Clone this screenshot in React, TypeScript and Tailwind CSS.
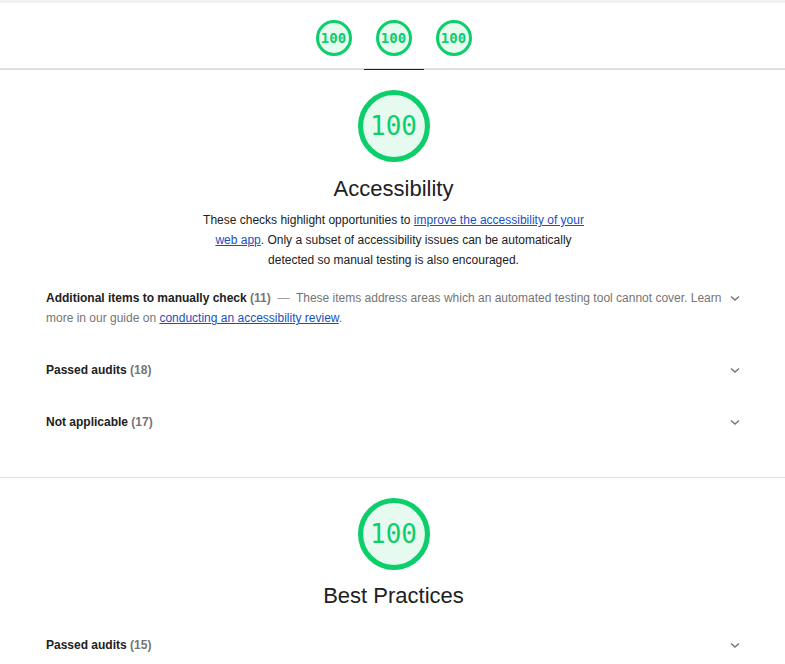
import React from "react";

const GREEN = "#0cce6b";

function Gauge({ size, stroke, fontClass }: { size: number; stroke: number; fontClass: string }) {
  return (
    <div className="relative flex items-center justify-center" style={{ width: size, height: size }}>
      <svg width={size} height={size} viewBox="0 0 120 120" className="absolute inset-0">
        <circle cx="60" cy="60" r={60 - stroke / 2} fill="#e7faf0" stroke={GREEN} strokeWidth={stroke} />
      </svg>
      <span
        className={`relative text-[#0cce6b] leading-none ${fontClass}`}
        style={{ fontFamily: '"DejaVu Sans Mono", "Liberation Mono", monospace' }}
      >
        100
      </span>
    </div>
  );
}

function Chevron() {
  return (
    <svg width="12" height="20" viewBox="0 0 12 20" className="shrink-0">
      <path d="M2 8.5 L6 12 L10 8.5" fill="none" stroke="#757575" strokeWidth="1.4" />
    </svg>
  );
}

function GroupRow({
  title,
  count,
  children,
}: {
  title: string;
  count: number;
  children?: React.ReactNode;
}) {
  return (
    <div className="flex items-start pl-[46px] pr-[44px] py-[16px]">
      <div className="flex-1 text-[12px] leading-[20px]">
        <span className="font-bold text-[#212121]">{title}</span>{" "}
        <span className="font-bold text-[#757575]">({count})</span>
        {children}
      </div>
      <Chevron />
    </div>
  );
}

export default function App() {
  return (
    <div
      className="w-[785px] min-h-[664px] bg-white text-[#212121]"
      style={{ fontFamily: '"Liberation Sans", Arial, sans-serif' }}
    >
      <div className="h-[3px] bg-[#f1f1f1]" />
      {/* header nav */}
      <div className="flex justify-center pl-[2px] border-b-2 border-[#e0e0e0]">
        {[0, 1, 2].map((i) => (
          <div key={i} className="relative w-[60px] h-[65px] flex justify-center pt-[17px]">
            <Gauge size={36} stroke={10} fontClass="text-[14px] font-bold" />
            {i === 1 && <span className="absolute left-0 right-0 bottom-[-2px] h-[1px] bg-[#202020]" />}
          </div>
        ))}
      </div>

      {/* Accessibility */}
      <section className="pt-[20px] pb-[29px] border-b border-[#e0e0e0]">
        <div className="flex flex-col items-center pl-[2px]">
          <Gauge size={72} stroke={8.5} fontClass="text-[26px]" />
          <h2 className="mt-[13px] text-[22px] leading-[28px] text-[#212121]">Accessibility</h2>
          <p className="mt-[7px] w-[400px] text-center text-[12px] leading-[20px] text-[#212121]">
            These checks highlight opportunities to{" "}
            <a className="text-[#1a4fc0] underline">improve the accessibility of your web app</a>. Only a
            subset of accessibility issues can be automatically detected so manual testing is also
            encouraged.
          </p>
        </div>
        <div className="mt-[2px]">
          <GroupRow title="Additional items to manually check" count={11}>
            <span className="text-[#9e9e9e]"> &nbsp;—&nbsp; </span>
            <span className="text-[#757575]">
              These items address areas which an automated testing tool cannot cover. Learn more in our
              guide on <a className="text-[#1a4fc0] underline">conducting an accessibility review</a>.
            </span>
          </GroupRow>
          <GroupRow title="Passed audits" count={18} />
          <GroupRow title="Not applicable" count={17} />
        </div>
      </section>

      {/* Best Practices */}
      <section className="pt-[20px]">
        <div className="flex flex-col items-center pl-[2px]">
          <Gauge size={72} stroke={8.5} fontClass="text-[26px]" />
          <h2 className="mt-[12px] text-[22px] leading-[28px] text-[#212121]">Best Practices</h2>
        </div>
        <div className="mt-[9px]">
          <GroupRow title="Passed audits" count={15} />
        </div>
      </section>
    </div>
  );
}
